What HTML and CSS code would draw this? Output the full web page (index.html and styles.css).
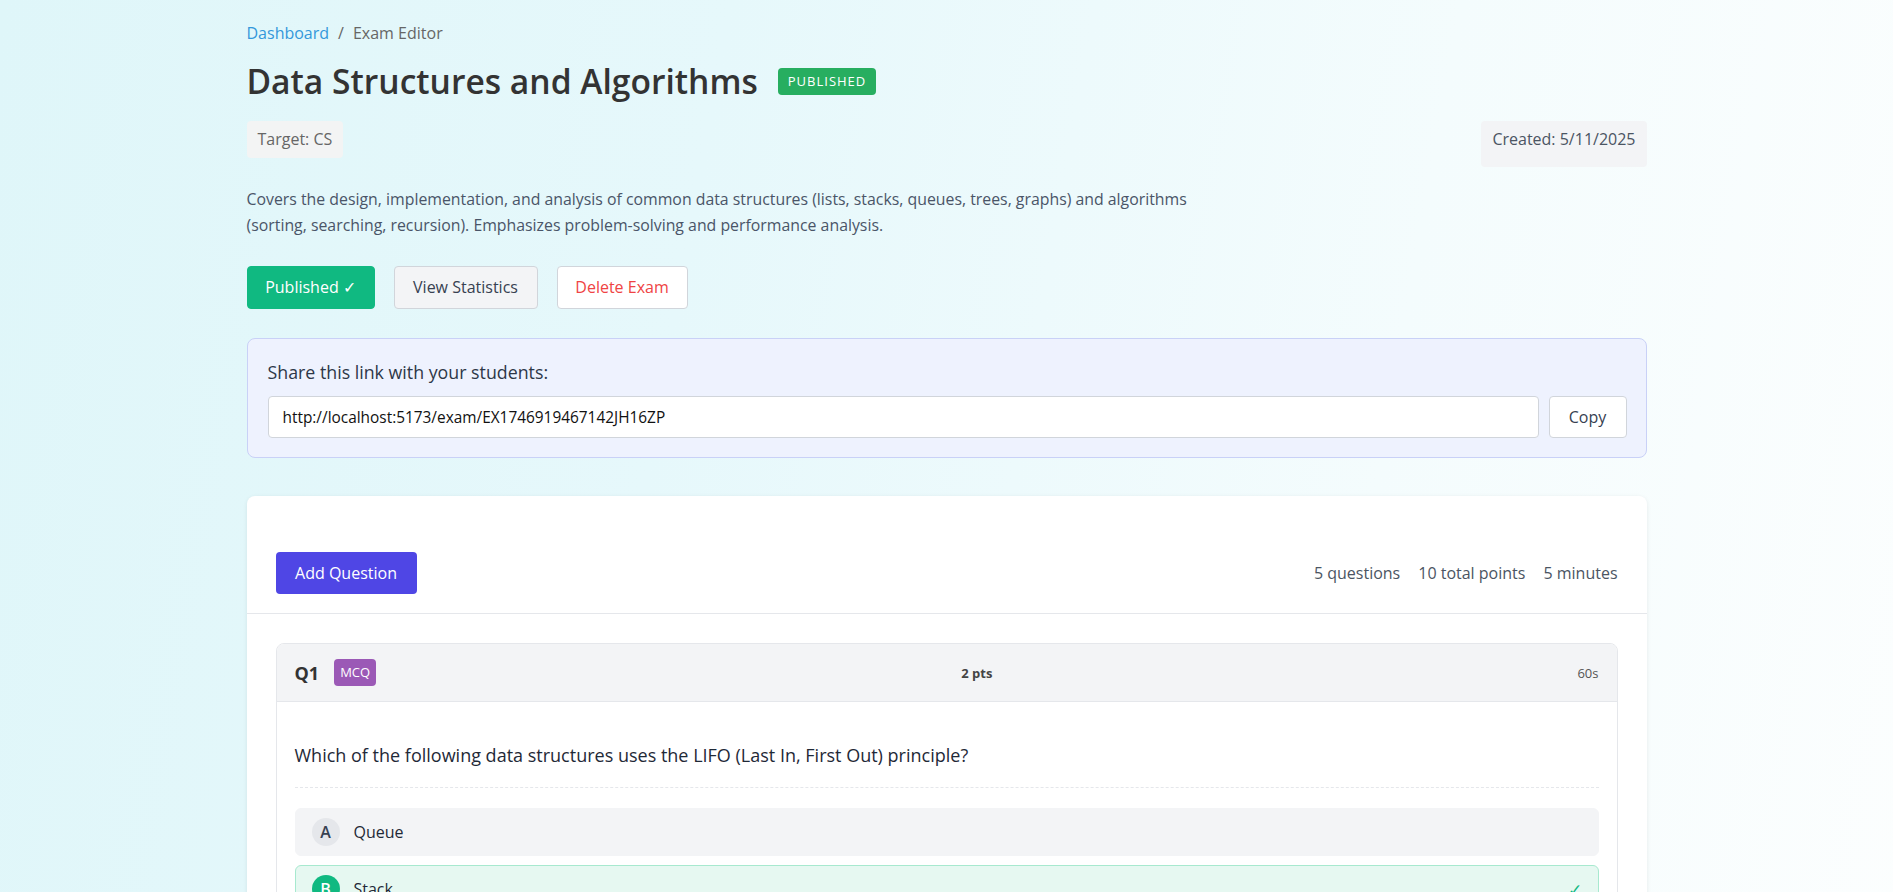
FILE: index.html
```html
<!DOCTYPE html>
<html lang="en">
<head>
<meta charset="utf-8">
<title>Exam Editor</title>
<link rel="stylesheet" href="styles.css">
</head>
<body>
<div class="page">
  <main class="container">
    <nav class="breadcrumb">
      <a class="crumb-link" href="#">Dashboard</a>
      <span class="crumb-sep">/</span>
      <span class="crumb-current">Exam Editor</span>
    </nav>

    <div class="title-row">
      <h1 class="title">Data Structures and Algorithms</h1>
      <span class="status-badge">PUBLISHED</span>
    </div>

    <div class="meta-row">
      <span class="chip chip-target">Target: CS</span>
      <span class="chip chip-created">Created: 5/11/2025</span>
    </div>

    <p class="description">Covers the design, implementation, and analysis of common data structures (lists, stacks, queues, trees, graphs) and algorithms (sorting, searching, recursion). Emphasizes problem-solving and performance analysis.</p>

    <div class="actions">
      <button class="btn btn-published">Published ✓</button>
      <button class="btn btn-stats">View Statistics</button>
      <button class="btn btn-delete">Delete Exam</button>
    </div>

    <section class="share-box">
      <p class="share-label">Share this link with your students:</p>
      <div class="share-row">
        <input class="share-input" type="text" value="http://localhost:5173/exam/EX1746919467142JH16ZP" readonly>
        <button class="btn-copy">Copy</button>
      </div>
    </section>

    <section class="card">
      <header class="card-header">
        <button class="btn-add">Add Question</button>
        <div class="stats">
          <span>5 questions</span>
          <span>10 total points</span>
          <span>5 minutes</span>
        </div>
      </header>
      <div class="card-body">
        <article class="question">
          <div class="q-head">
            <div class="q-left">
              <span class="q-num">Q1</span>
              <span class="q-type">MCQ</span>
            </div>
            <span class="q-points">2 pts</span>
            <span class="q-time">60s</span>
          </div>
          <div class="q-body">
            <p class="q-text">Which of the following data structures uses the LIFO (Last In, First Out) principle?</p>
            <ul class="options">
              <li class="option"><span class="opt-letter">A</span><span class="opt-text">Queue</span></li>
              <li class="option option-correct"><span class="opt-letter">B</span><span class="opt-text">Stack</span><span class="opt-check">✓</span></li>
              <li class="option"><span class="opt-letter">C</span><span class="opt-text">Linked List</span></li>
              <li class="option"><span class="opt-letter">D</span><span class="opt-text">Binary Tree</span></li>
            </ul>
          </div>
        </article>
      </div>
    </section>
  </main>
</div>
</body>
</html>
```
FILE: styles.css
```css
* { box-sizing: border-box; }

html, body {
  margin: 0;
  padding: 0;
}

body {
  font-family: "Open Sans", "Noto Sans", "Liberation Sans", sans-serif;
  color: #333;
  background: linear-gradient(100deg, #dff6f9 0%, #e6f8fb 35%, #f4fcfd 70%, #fcfefe 100%);
  min-height: 892px;
}

.page {
  min-height: 892px;
}

.container {
  max-width: 1400px;
  margin: 0 auto;
  padding: 21px 0 40px;
}

/* breadcrumb */
.breadcrumb {
  font-size: 16px;
  line-height: 24px;
  color: #666;
  display: flex;
  gap: 9px;
}
.crumb-link {
  color: #3498db;
  text-decoration: none;
}

/* title */
.title-row {
  display: flex;
  align-items: center;
  gap: 20px;
  margin-top: 15px;
}
.title {
  margin: 0;
  font-size: 33.6px;
  line-height: 43px;
  font-weight: 600;
  color: #333;
}
.status-badge {
  background: #27ae60;
  color: #fff;
  font-size: 13px;
  letter-spacing: 1px;
  padding: 4px 10px;
  border-radius: 4px;
  line-height: 19px;
}

/* meta */
.meta-row {
  display: flex;
  justify-content: space-between;
  align-items: flex-start;
  margin-top: 18px;
}
.chip {
  font-size: 16px;
  border-radius: 4px;
}
.chip-target {
  background: #f3f4f4;
  color: #666;
  padding: 7px 11px 8px;
  line-height: 22px;
}
.chip-created {
  background: #f3f4f6;
  color: #4b5563;
  padding: 7px 11px 17px;
  line-height: 22px;
}

.description {
  margin: 19px 0 0;
  max-width: 960px;
  font-size: 15.85px;
  line-height: 26px;
  color: #4a5568;
}

/* actions */
.actions {
  display: flex;
  gap: 19px;
  margin-top: 28px;
}
.btn {
  font-family: inherit;
  font-size: 16px;
  line-height: 21px;
  padding: 10px 12px;
  border-radius: 4px;
  border: 1px solid transparent;
  height: 43px;
}
.btn-published {
  background: #10b981;
  color: #fff;
  border-color: #10b981;
  width: 128px;
}
.btn-stats {
  background: #f3f4f6;
  color: #374151;
  border-color: #d1d5db;
  width: 144px;
}
.btn-delete {
  background: #fff;
  color: #ef4444;
  border-color: #d1d5db;
  width: 131px;
}

/* share */
.share-box {
  margin-top: 29px;
  background: #eef2fe;
  border: 1px solid #c9d1f7;
  border-radius: 8px;
  padding: 20px 19px 19px 20px;
}
.share-label {
  margin: 0 0 11px;
  font-size: 17.8px;
  line-height: 26px;
  color: #2d3748;
}
.share-row {
  display: flex;
  gap: 10px;
}
.share-input {
  flex: 1;
  height: 42px;
  border: 1px solid #d1d5db;
  border-radius: 4px;
  padding: 0 14px;
  font-family: inherit;
  font-size: 15.4px;
  color: #111;
  background: #fff;
}
.btn-copy {
  width: 78px;
  height: 42px;
  background: #fff;
  border: 1px solid #d1d5db;
  border-radius: 4px;
  font-family: inherit;
  font-size: 16px;
  color: #374151;
}

/* card */
.card {
  margin-top: 38px;
  background: #fff;
  border-radius: 8px;
  box-shadow: 0 1px 4px rgba(0, 0, 0, 0.08);
}
.card-header {
  display: flex;
  justify-content: space-between;
  align-items: center;
  padding: 56px 29px 19px;
  border-bottom: 1px solid #e5e7eb;
}
.btn-add {
  background: #4f46e5;
  color: #fff;
  border: none;
  border-radius: 4px;
  font-family: inherit;
  font-size: 16px;
  width: 141px;
  height: 42px;
}
.stats {
  display: flex;
  gap: 18px;
  font-size: 16px;
  color: #4b5563;
}

.card-body {
  padding: 29px 29px 29px;
}

.question {
  border: 1px solid #e5e7eb;
  border-radius: 8px;
  overflow: hidden;
}
.q-head {
  display: flex;
  justify-content: space-between;
  align-items: center;
  background: #f3f4f6;
  height: 58px;
  padding: 0 18px;
  border-bottom: 1px solid #e5e7eb;
}
.q-left {
  display: flex;
  align-items: center;
  gap: 15px;
}
.q-num {
  font-size: 18px;
  font-weight: 700;
  color: #333;
}
.q-type {
  background: #9b59b6;
  color: #fff;
  font-size: 13px;
  padding: 3px 6px;
  border-radius: 4px;
  line-height: 21px;
}
.q-points {
  font-size: 13px;
  font-weight: 700;
  color: #444;
}
.q-time {
  font-size: 13px;
  color: #555;
}

.q-body {
  padding: 20px 18px;
}
.q-text {
  margin: 20px 0 0;
  padding-bottom: 18px;
  border-bottom: 1px dashed #e5e7eb;
  font-size: 18px;
  line-height: 27px;
  color: #1f2937;
}
.options {
  list-style: none;
  margin: 20px 0 0;
  padding: 0;
  display: flex;
  flex-direction: column;
  gap: 9px;
}
.option {
  display: flex;
  align-items: center;
  gap: 14px;
  height: 48px;
  padding: 0 16px;
  background: #f3f4f6;
  border: 1px solid #f3f4f6;
  border-radius: 6px;
  font-size: 16px;
  color: #1f2937;
}
.opt-letter {
  width: 28px;
  height: 28px;
  border-radius: 50%;
  background: #e5e7eb;
  color: #374151;
  font-weight: 600;
  display: flex;
  align-items: center;
  justify-content: center;
  font-size: 16px;
}
.opt-text {
  flex: 1;
}
.option-correct {
  background: #e6f8f1;
  border-color: #a7e9cf;
}
.option-correct .opt-letter {
  background: #10b981;
  color: #fff;
}
.opt-check {
  color: #10b981;
  font-size: 17px;
}
```
